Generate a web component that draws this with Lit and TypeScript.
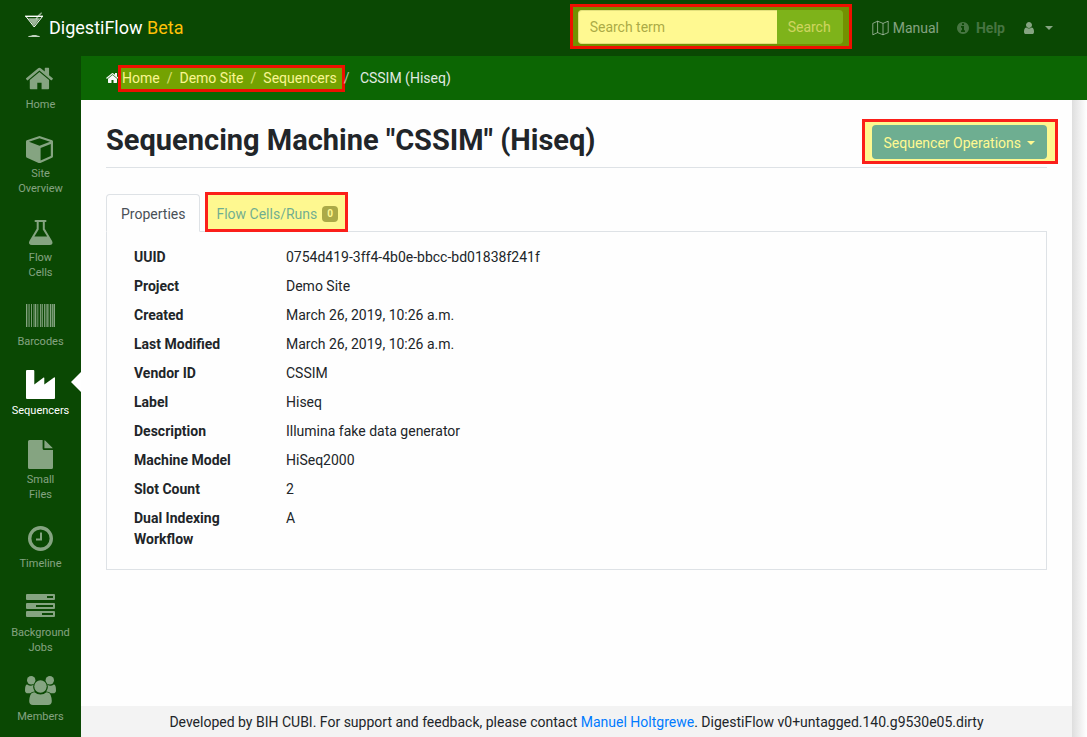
import { LitElement, html, svg, css } from "lit";
import { customElement } from "lit/decorators.js";
import { classMap } from "lit/directives/class-map.js";

const homePath =
  "M1408 992v480q0 26-19 45t-45 19h-384v-384h-256v384h-384q-26 0-45-19t-19-45v-480q0-1 .5-3t.5-3l575-474 575 474q1 2 1 6zm223-69l-62 74q-8 9-21 11h-3q-13 0-21-7l-692-577-692 577q-12 8-24 7-13-2-21-11l-62-74q-8-10-7-23.5t11-21.5l719-599q32-26 76-26t76 26l244 204v-195q0-14 9-23t23-9h192q14 0 23 9t9 23v408l219 182q10 8 11 21.5t-7 23.5z";
const userPath =
  "M1536 1399q0 109-62.5 187t-150.5 78h-854q-88 0-150.5-78t-62.5-187q0-85 8.5-160.5t31.5-152 58.5-131 94-89 134.5-34.5q131 128 313 128t313-128q76 0 134.5 34.5t94 89 58.5 131 31.5 152 8.5 160.5zm-256-887q0 159-112.5 271.5t-271.5 112.5-271.5-112.5-112.5-271.5 112.5-271.5 271.5-112.5 271.5 112.5 112.5 271.5z";
const infoPath =
  "M1152 1376v-160q0-14-9-23t-23-9h-96v-512q0-14-9-23t-23-9h-320q-14 0-23 9t-9 23v160q0 14 9 23t23 9h96v320h-96q-14 0-23 9t-9 23v160q0 14 9 23t23 9h448q14 0 23-9t9-23zm-128-896v-160q0-14-9-23t-23-9h-192q-14 0-23 9t-9 23v160q0 14 9 23t23 9h192q14 0 23-9t9-23zm640 416q0 209-103 385.5t-279.5 279.5-385.5 103-385.5-103-279.5-279.5-103-385.5 103-385.5 279.5-279.5 385.5-103 385.5 103 279.5 279.5 103 385.5z";

// Bars of the barcode icon: [x, width, opacity]
const bars = [
  [1, 1.2, 1], [2.8, 0.8, 0.8], [4, 1, 0.6], [6, 1, 0.9], [8, 0.8, 0.6], [9.5, 1.8, 1],
  [12, 1, 0.6], [13.5, 0.6, 0.6], [15, 1.4, 0.9], [17, 1, 0.8], [19, 1.4, 0.9],
  [21.4, 1.4, 1], [23.4, 0.8, 0.9], [25, 1.2, 1], [26.8, 1.4, 0.9], [28.6, 1.4, 1],
];

const icons: Record<string, unknown> = {
  home: svg`<g transform="translate(.5 .5) scale(.016741)"><path d=${homePath} /></g>`,
  cube: svg`<path fill-rule="evenodd" d="M14.5 4 L27.2 8.3 Q28 8.6 28 9.6 V24.2 Q28 25.3 27 25.8 L15.4 30.9 Q14.5 31.3 13.6 30.9 L2 25.8 Q1 25.3 1 24.2 V9.6 Q1 8.6 1.8 8.3 Z M14.5 6.2 L4 9.8 L14.5 13.8 L25 9.8 Z M15.6 16 V28.5 L25.8 24 V12 Z"/>`,
  flask: svg`<path fill-rule="evenodd" d="M10.5 4 h10 q1 0 1 1 t-1 1 h-.7 v6.8 l7 11.6 q1.2 2 .5 3.3 t-2.7 1.3 H6.9 q-2 0 -2.7 -1.3 t.5 -3.3 l7 -11.6 V6 h-1.2 q-1 0 -1 -1 t1 -1 z M13.7 6 v7.4 L9.4 20.6 h12.8 L17.8 13.4 V6 z"/>`,
  barcode: bars.map(([x, w, o]) => svg`<rect x=${x} y="4" width=${w} height="23" opacity=${o} />`),
  industry: svg`<path d="M2 1 h6.4 q.9 0 .9 1 V15.6 L18.6 8.5 q.7 -.4 .7 .5 V15.6 L29 8.5 q1 -.5 1 .6 V29 q0 1 -1 1 H2 q-1 0 -1 -1 V2 q0 -1 1 -1z"/>`,
  file: svg`<path d="M4.5 2 H17.6 V10.5 q0 1.6 1.6 1.6 H28 V29.5 q0 1.5 -1.5 1.5 H4.5 Q3 31 3 29.5 V3.5 Q3 2 4.5 2z M19.4 2.2 q.6 .2 1 .6 L27.2 9.4 q.4 .4 .6 .9 H19.4z"/>`,
  clock: svg`<circle cx="15.5" cy="16.5" r="10.8" fill="none" stroke="currentColor" stroke-width="3.4"/><path d="M15 10.5 h2 v8 h-6 v-2 h4z"/>`,
  tasks: svg`<path fill-rule="evenodd" d="M2 3 h27 q1 0 1 1 v4 q0 1-1 1 h-27 q-1 0-1-1 v-4 q0-1 1-1z M22 5 v2 h6 v-2z M2 12 h27 q1 0 1 1 v4 q0 1-1 1 h-27 q-1 0-1-1 v-4 q0-1 1-1z M11 14 v2 h17 v-2z M2 20 h27 q1 0 1 1 v4 q0 1-1 1 h-27 q-1 0-1-1 v-4 q0-1 1-1z M17 22 v2 h11 v-2z"/>`,
  users: svg`<circle cx="6.2" cy="5.2" r="4.2"/><circle cx="24.8" cy="5.2" r="4.2"/><circle cx="15.5" cy="11.5" r="6.2"/><path d="M8.8 9.2 Q8 10.6 8.2 12.2 Q8.3 14.6 9.8 16.4 Q7 16.4 5.2 18.2 H3 Q0 18.2 0 15.4 Q0 9.6 2.2 9.6 Q6 12.2 8.8 9.2z M22.2 9.2 Q23 10.6 22.8 12.2 Q22.7 14.6 21.2 16.4 Q24 16.4 25.8 18.2 H28 Q31 18.2 31 15.4 Q31 9.6 28.8 9.6 Q25 12.2 22.2 9.2z M9.6 17.2 Q12 19.4 15.5 19.4 T21.4 17.2 Q24.6 17.2 25.8 20.4 Q26.8 23 26.8 26 Q26.8 30 23 30 H8 Q4.2 30 4.2 26 Q4.2 23 5.2 20.4 Q6.4 17.2 9.6 17.2z"/>`,
};

const navItems = [
  { icon: "home", label: ["Home"] },
  { icon: "cube", label: ["Site", "Overview"] },
  { icon: "flask", label: ["Flow", "Cells"] },
  { icon: "barcode", label: ["Barcodes"] },
  { icon: "industry", label: ["Sequencers"], active: true },
  { icon: "file", label: ["Small", "Files"] },
  { icon: "clock", label: ["Timeline"] },
  { icon: "tasks", label: ["Background", "Jobs"] },
  { icon: "users", label: ["Members"] },
];

const properties = [
  ["UUID", "0754d419-3ff4-4b0e-bbcc-bd01838f241f"],
  ["Project", "Demo Site"],
  ["Created", "March 26, 2019, 10:26 a.m."],
  ["Last Modified", "March 26, 2019, 10:26 a.m."],
  ["Vendor ID", "CSSIM"],
  ["Label", "Hiseq"],
  ["Description", "Illumina fake data generator"],
  ["Machine Model", "HiSeq2000"],
  ["Slot Count", "2"],
  ["Dual Indexing Workflow", "A"],
];

@customElement("app-root")
export class AppRoot extends LitElement {
  static styles = css`
    :host {
      display: flex;
      flex-direction: column;
      height: 100vh;
      overflow: hidden;
      background: #fff;
      color: #212529;
      font: 14px/21px Roboto, "Liberation Sans", sans-serif;
    }
    * { box-sizing: border-box; }
    a { color: inherit; text-decoration: none; }
    button, input { font: inherit; }
    svg { display: block; fill: currentColor; flex: none; }

    .marked { position: relative; }
    .marked::after {
      content: "";
      position: absolute;
      inset: -6px -9px -5px -8px;
      border: 3px solid #fb1f1a;
      background: rgba(255, 240, 0, 0.43);
      background-clip: padding-box;
      pointer-events: none;
    }
    .marked.dark::after { border-color: #ee1000; }

    .topbar {
      flex: none;
      display: flex;
      align-items: center;
      height: 56px;
      padding: 0 34px 0 25px;
      background: #0a4803;
      color: rgba(255, 255, 255, 0.5);
    }
    .brand {
      display: flex;
      align-items: center;
      gap: 5px;
      margin-right: auto;
      padding-bottom: 2px;
      color: #fff;
      font-size: 18px;
      line-height: 27px;
    }
    .beta { color: #ffc107; }
    .search { display: flex; height: 34px; margin: 0 29px 2px 0; }
    .search input {
      width: 199px;
      padding: 0 11px;
      border: 1px solid #ced4da;
      border-right: 0;
      border-radius: 4px 0 0 4px;
      background: #fff;
    }
    .search input::placeholder { color: #6c757d; opacity: 1; }
    .search button {
      padding: 0 12px 0 11px;
      border: 0;
      border-radius: 0 4px 4px 0;
      background: #28a745;
      color: #fff;
      opacity: 0.65;
    }
    .links { display: flex; gap: 17px; }
    .links > * { display: flex; align-items: center; gap: 4px; }
    .links .help { gap: 6px; color: rgba(255, 255, 255, 0.25); font-weight: 700; }
    .links .account {
      gap: 9px;
      padding: 0;
      border: 0;
      background: none;
      color: inherit;
    }
    .caret {
      border: 4px solid transparent;
      border-top-color: currentColor;
      border-bottom: 0;
    }

    .body { flex: 1; display: flex; min-height: 0; }
    .sidebar {
      flex: none;
      width: 81px;
      display: flex;
      flex-direction: column;
      gap: 20px;
      padding-top: 7px;
      background: #0a4803;
      color: rgba(255, 255, 255, 0.5);
      font-size: 11px;
      line-height: 15px;
      text-align: center;
      overflow: hidden;
    }
    .item {
      position: relative;
      display: flex;
      flex-direction: column;
      align-items: center;
      gap: 2px;
      padding: 0 8px;
    }
    .item.active { color: #fff; }
    .item.active::after {
      content: "";
      position: absolute;
      top: 3px;
      right: 0;
      border: 10px solid transparent;
      border-right-color: #fff;
      border-left: 0;
    }
    .line { display: block; }

    .column { flex: 1; min-width: 0; display: flex; flex-direction: column; }
    .crumbs {
      flex: none;
      display: flex;
      align-items: center;
      gap: 2px;
      height: 44px;
      padding: 0 25px;
      background: #0c6603;
      color: #f8f9fa;
    }
    .trail { display: flex; gap: 7px; }
    .trail.marked::after { inset: -3px -8px -3px -4px; }
    .crumbs i { font-style: normal; opacity: 0.75; }
    .crumbs .last { padding-left: 5px; opacity: 0.9; }
    .crumbs .last i { padding-right: 7px; }

    .scroller {
      flex: 1;
      min-height: 0;
      display: flex;
      padding-right: 15px;
      background: linear-gradient(to right, #dedede, #fff) right / 15px 100% no-repeat;
    }
    .page { flex: 1; min-width: 0; display: flex; flex-direction: column; background: #fefefe; }
    main { flex: 1; padding: 20px 25px; }
    .heading {
      display: flex;
      align-items: center;
      justify-content: space-between;
      padding-bottom: 3px;
      margin-bottom: 26px;
      border-bottom: 1px solid #dee2e6;
    }
    h1 { margin: 0; padding-bottom: 4px; font-size: 29px; line-height: 40px; font-weight: 700; }
    .ops.marked::after { inset: -6px -11px -5px -10px; }
    .ops button {
      display: flex;
      align-items: center;
      gap: 6px;
      height: 34px;
      padding: 2px 12px 0;
      border: 0;
      border-radius: 4px;
      background: #007bff;
      color: #fff;
    }

    .tabs { display: flex; gap: 5px; margin-bottom: -1px; position: relative; }
    .tabs button {
      display: flex;
      align-items: center;
      gap: 5px;
      height: 38px;
      padding: 2px 14px 0;
      border: 1px solid transparent;
      border-radius: 4px 4px 0 0;
      background: none;
      color: #007bff;
    }
    .tabs .selected { border-color: #dee2e6; border-bottom-color: #fefefe; background: #fefefe; color: #495057; }
    .tabs .marked { padding: 2px 9px 0 10px; }
    .tabs .marked::after { inset: -3px -1px -1px; }
    .badge {
      padding: 2px 5px;
      border-radius: 4px;
      background: #6c757d;
      color: #fff;
      font-size: 10px;
      line-height: 12px;
      font-weight: 700;
    }
    .panel { padding: 15px 27px 19px; border: 1px solid #dee2e6; }
    dl { display: grid; grid-template-columns: 122px 1fr; gap: 8px 30px; margin: 0; }
    dt { font-weight: 700; }
    dd { margin: 0; }

    footer { padding: 6px 16px 5px; background: #f3f3f3; line-height: 20px; text-align: center; }
    footer a { color: #007bff; }
  `;

  render() {
    return html`
      <header class="topbar">
        <a class="brand" href="#">
          <svg width="19" height="30" viewBox="0 0 19 30" aria-hidden="true">
            <path d="M1 4.5 H17.5 L9.2 15 Z" fill="none" stroke="#fff" stroke-width="1" />
            <path d="M0 3.6 h18 v1.2 H0z" />
            <path d="M3 6.2 H15 L9.2 14 Z" opacity=".6" />
            <path d="M11 7 l4 -5 M15 2.6 l1.6 -2" stroke="#fff" stroke-width="1.4" opacity=".55" />
            <path d="M3 24.8 q0 -1 3 -1 l1.6 -.6 h3.4 l1.6 .6 q2.4 0 2.4 1z" />
          </svg>
          <span>DigestiFlow <span class="beta">Beta</span></span>
        </a>
        <form class="search marked dark" @submit=${(e: Event) => e.preventDefault()}>
          <input type="text" placeholder="Search term" aria-label="Search term" />
          <button type="submit">Search</button>
        </form>
        <nav class="links">
          <a href="#">
            <svg width="17" height="16" viewBox="0 0 17 16" aria-hidden="true">
              <path d="M.8 3.4 L5.6 1.2 L11 3.4 L16.2 1.2 V12.6 L11 14.8 L5.6 12.6 L.8 14.8Z M5.6 1.2 V12.6 M11 3.4 V14.8" fill="none" stroke="currentColor" stroke-width="1" />
            </svg>
            Manual
          </a>
          <a class="help" href="#">
            <svg width="14" height="14" viewBox="0 0 1792 1792" aria-hidden="true"><path d=${infoPath} /></svg>
            Help
          </a>
          <button class="account" aria-label="Account">
            <svg width="14" height="14" viewBox="0 0 1792 1792" aria-hidden="true"><path d=${userPath} /></svg>
            <span class="caret"></span>
          </button>
        </nav>
      </header>
      <div class="body">
        <nav class="sidebar">
          ${navItems.map(
            (n) => html`<a class=${classMap({ item: true, active: !!n.active })} href="#">
              <svg width="31" height="32" viewBox="0 0 31 32" aria-hidden="true">${icons[n.icon]}</svg>
              <span>${n.label.map((part) => html`<span class="line">${part}</span>`)}</span>
            </a>`
          )}
        </nav>
        <div class="column">
          <nav class="crumbs">
            <svg width="14" height="14" viewBox="0 0 1792 1792" aria-hidden="true"><path d=${homePath} /></svg>
            <div class="trail marked dark">
              <a href="#">Home</a><i>/</i><a href="#">Demo Site</a><i>/</i><a href="#">Sequencers</a>
            </div>
            <span class="last"><i>/</i> CSSIM (Hiseq)</span>
          </nav>
          <div class="scroller">
            <div class="page">
              <main>
                <div class="heading">
                  <h1>Sequencing Machine "CSSIM" (Hiseq)</h1>
                  <div class="ops marked">
                    <button>Sequencer Operations <span class="caret"></span></button>
                  </div>
                </div>
                <div class="tabs" role="tablist">
                  <button class="selected" role="tab" aria-selected="true">Properties</button>
                  <button class="marked" role="tab" aria-selected="false">
                    Flow Cells/Runs <span class="badge">0</span>
                  </button>
                </div>
                <section class="panel">
                  <dl>${properties.map(([k, v]) => html`<dt>${k}</dt><dd>${v}</dd>`)}</dl>
                </section>
              </main>
              <footer>
                Developed by BIH CUBI. For support and feedback, please contact
                <a href="#">Manuel Holtgrewe</a>. DigestiFlow v0+untagged.140.g9530e05.dirty
              </footer>
            </div>
          </div>
        </div>
      </div>
    `;
  }
}
